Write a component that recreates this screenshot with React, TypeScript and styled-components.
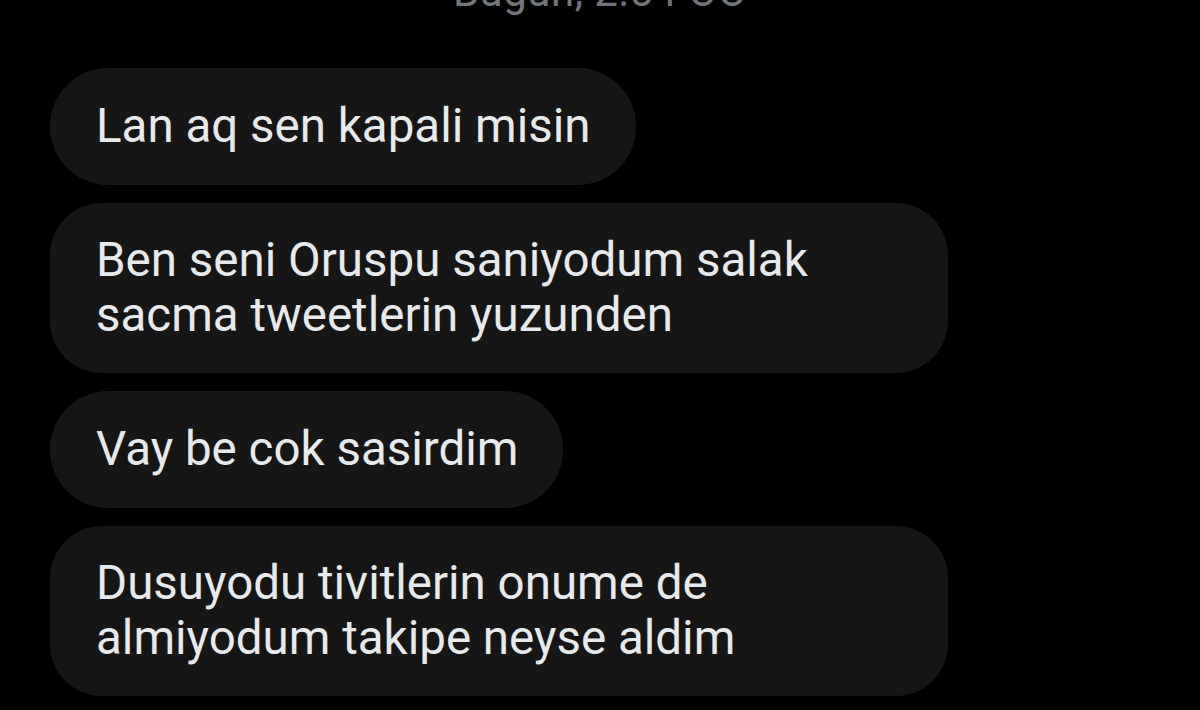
import React from "react";
import styled, { createGlobalStyle } from "styled-components";

const Global = createGlobalStyle`
  html, body { margin: 0; padding: 0; background: #000; }
  body { font-family: Roboto, "Noto Sans", Arial, sans-serif; overflow: hidden; }
`;

const Screen = styled.div`
  width: 1200px;
  height: 710px;
  background: #000;
  overflow: hidden;
  display: flex;
  flex-direction: column;
`;

const Stamp = styled.div`
  margin-top: -30px;
  height: 44px;
  line-height: 44px;
  text-align: center;
  color: #71767b;
  font-size: 42px;
  letter-spacing: 0.5px;
`;

const Thread = styled.div`
  display: flex;
  flex-direction: column;
  align-items: flex-start;
  gap: 18px;
  padding: 54px 0 0 50px;
`;

const Bubble = styled.div<{ $multi?: boolean }>`
  box-sizing: border-box;
  max-width: 898px;
  width: ${(p) => (p.$multi ? "898px" : "fit-content")};
  background: #161616;
  color: #e7e9ea;
  border-radius: ${(p) => (p.$multi ? "52px" : "58px")};
  padding: ${(p) => (p.$multi ? "30px 46px 30px 46px" : "31px 45px 31px 46px")};
  font-size: 47.5px;
  line-height: 55px;
  white-space: pre-line;
`;

const messages: { text: string; multi?: boolean }[] = [
  { text: "Lan aq sen kapali misin" },
  { text: "Ben seni Oruspu saniyodum salak\nsacma tweetlerin yuzunden", multi: true },
  { text: "Vay be cok sasirdim" },
  { text: "Dusuyodu tivitlerin onume de\nalmiyodum takipe neyse aldim", multi: true },
];

export default function App() {
  return (
    <>
      <Global />
      <Screen>
        <Stamp>Bugün, 2:54 ÖÖ</Stamp>
        <Thread>
          {messages.map((m, i) => (
            <Bubble key={i} $multi={m.multi}>
              {m.text}
            </Bubble>
          ))}
        </Thread>
      </Screen>
    </>
  );
}
